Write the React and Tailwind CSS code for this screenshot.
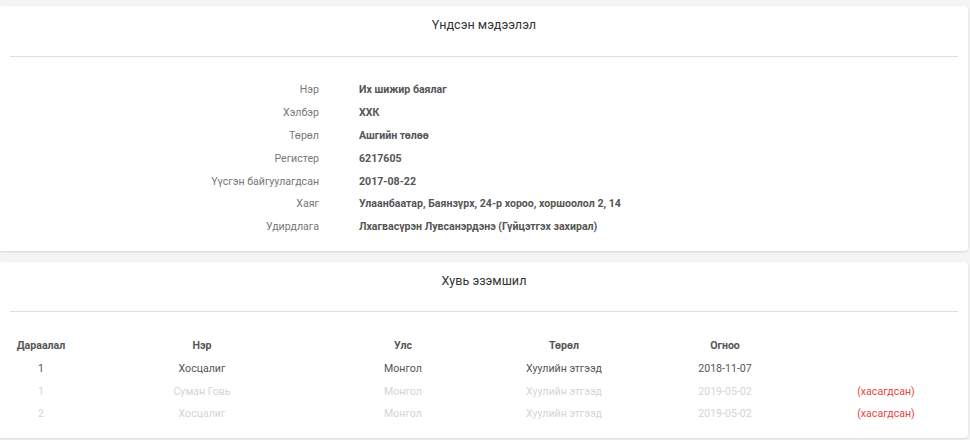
import React from 'react';

const info = [
  ['Нэр', 'Их шижир баялаг'],
  ['Хэлбэр', 'ХХК'],
  ['Төрөл', 'Ашгийн төлөө'],
  ['Регистер', '6217605'],
  ['Үүсгэн байгуулагдсан', '2017-08-22'],
  ['Хаяг', 'Улаанбаатар, Баянзүрх, 24-р хороо, хоршоолол 2, 14'],
  ['Удирдлага', 'Лхагвасүрэн Лувсанэрдэнэ (Гүйцэтгэх захирал)'],
];

const owners = [
  { seq: '1', name: 'Хосцалиг', country: 'Монгол', type: 'Хуулийн этгээд', date: '2018-11-07', removed: false },
  { seq: '1', name: 'Суман Говь', country: 'Монгол', type: 'Хуулийн этгээд', date: '2019-05-02', removed: true },
  { seq: '2', name: 'Хосцалиг', country: 'Монгол', type: 'Хуулийн этгээд', date: '2019-05-02', removed: true },
];

const cols = 'grid grid-cols-[62px_260px_142px_180px_142px_164px] text-center';

const CardHeader = ({ title, height }) => (
  <div className={`mx-[10px] border-b border-[#e0e0e0] pt-[10px] ${height}`}>
    <h2 className="text-[12.6px] leading-[18px] text-[#333] text-center">{title}</h2>
  </div>
);

export default function App() {
  return (
    <div
      className="min-h-screen bg-[#f5f5f5] pt-[6px] pr-[2px] text-[10.6px]"
      style={{ fontFamily: 'Roboto, "Liberation Sans", sans-serif' }}
    >
      {/* Basic info */}
      <div className="bg-white rounded-r-[4px] shadow-[0_1px_3px_rgba(0,0,0,0.12)]">
        <CardHeader title="Үндсэн мэдээлэл" height="h-[51px]" />
        <div className="pt-[22px] pb-[12px]">
          {info.map(([label, value]) => (
            <div key={label} className="flex h-[22.8px] items-center">
              <span className="w-[319px] text-right text-[#777]">{label}</span>
              <span className="ml-[40px] font-bold text-[#555]">{value}</span>
            </div>
          ))}
        </div>
      </div>

      {/* Ownership */}
      <div className="mt-[11px] bg-white rounded-r-[4px] shadow-[0_1px_3px_rgba(0,0,0,0.12)] overflow-hidden">
        <CardHeader title="Хувь эзэмшил" height="h-[50px]" />
        <div className="px-[10px] pt-[23px] pb-[12px]">
          <div className={`${cols} h-[23px] items-center font-bold text-[#555]`}>
            <span>Дараалал</span>
            <span>Нэр</span>
            <span>Улс</span>
            <span>Төрөл</span>
            <span>Огноо</span>
            <span></span>
          </div>
          {owners.map((o, i) => (
            <div
              key={i}
              className={`${cols} h-[22.7px] items-center ${o.removed ? 'text-[#d4d4d4]' : 'text-[#555]'}`}
            >
              <span>{o.seq}</span>
              <span>{o.name}</span>
              <span>{o.country}</span>
              <span>{o.type}</span>
              <span>{o.date}</span>
              <span className="pl-[16px] text-[#e8453c]">{o.removed ? '(хасагдсан)' : ''}</span>
            </div>
          ))}
        </div>
      </div>
    </div>
  );
}
